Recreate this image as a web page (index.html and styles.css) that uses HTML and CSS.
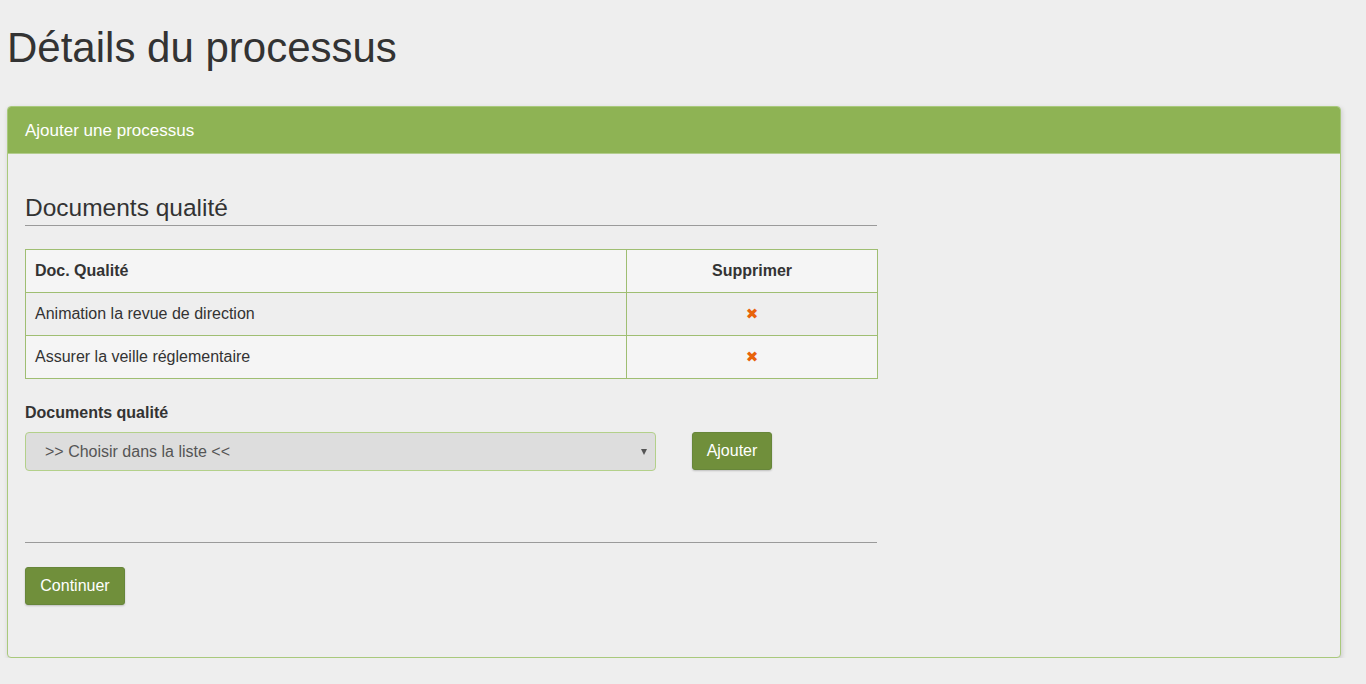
FILE: index.html
```html
<!DOCTYPE html>
<html lang="fr">
<head>
<meta charset="utf-8">
<title>Détails du processus</title>
<link rel="stylesheet" href="styles.css">
</head>
<body>
<h1 class="page-title">Détails du processus</h1>
<div class="panel">
  <div class="panel-heading">Ajouter une processus</div>
  <div class="panel-body">
    <div class="content">
      <h3 class="section-title">Documents qualité</h3>
      <table class="doc-table">
        <thead>
          <tr><th class="col-name">Doc. Qualité</th><th class="col-del">Supprimer</th></tr>
        </thead>
        <tbody>
          <tr class="odd"><td>Animation la revue de direction</td><td class="col-del"><span class="del">&#x2716;</span></td></tr>
          <tr><td>Assurer la veille réglementaire</td><td class="col-del"><span class="del">&#x2716;</span></td></tr>
        </tbody>
      </table>
      <label class="field-label">Documents qualité</label>
      <div class="field-row">
        <div class="select">
          <span>&gt;&gt; Choisir dans la liste &lt;&lt;</span>
          <span class="caret"></span>
        </div>
        <button class="btn btn-add">Ajouter</button>
      </div>
      <hr class="sep">
      <button class="btn btn-next">Continuer</button>
    </div>
  </div>
</div>
</body>
</html>
```

FILE: styles.css
```css
html, body {
  margin: 0;
  padding: 0;
  background: #eeeeee;
  font-family: "Liberation Sans", Arial, sans-serif;
  font-size: 16px;
  color: #333333;
}
body {
  padding: 0 25px 0 7px;
}
.page-title {
  margin: 0;
  padding: 24px 0 0 0;
  height: 106px;
  box-sizing: border-box;
  font-size: 42px;
  font-weight: normal;
  line-height: 48px;
  color: #333333;
}
.panel {
  border: 1px solid #a9c97c;
  border-radius: 4px;
  box-shadow: 1px 2px 5px rgba(0,0,0,0.15);
  background: #eeeeee;
}
.panel-heading {
  background: #8eb354;
  color: #ffffff;
  height: 47px;
  box-sizing: border-box;
  padding: 0 17px;
  line-height: 47px;
  font-size: 17px;
  border-radius: 3px 3px 0 0;
  border-bottom: 1px solid #b3cd8e;
}
.panel-body {
  padding: 40px 17px 52px;
}
.content {
  width: 852px;
}
.section-title {
  margin: 0;
  font-size: 24.5px;
  font-weight: normal;
  line-height: 28px;
  padding-bottom: 3px;
  border-bottom: 1px solid #9a9a9a;
  color: #333;
}
.doc-table {
  margin-top: 23px;
  width: 853px;
  border-collapse: collapse;
  border: 1px solid #9fbe72;
}
.doc-table th, .doc-table td {
  border: 1px solid #9fbe72;
  height: 43px;
  padding: 0 9px;
  text-align: left;
  box-sizing: border-box;
}
.doc-table thead tr { background: #f5f5f5; }
.doc-table tbody tr { background: #f5f5f5; }
.doc-table tbody tr.odd { background: #eeeeee; }
.doc-table th { font-weight: bold; }
.col-name { width: 601px; }
.doc-table .col-del { text-align: center; }
.del {
  color: #e8630a;
  font-size: 15px;
  font-family: "DejaVu Sans", sans-serif;
}
.field-label {
  display: block;
  font-weight: bold;
  margin-top: 24px;
  line-height: 20px;
}
.field-row {
  display: flex;
  align-items: flex-start;
  gap: 36px;
  margin-top: 9px;
}
.select {
  width: 631px;
  height: 39px;
  box-sizing: border-box;
  border: 1px solid #b3d08a;
  border-radius: 4px;
  background: #dddddd;
  display: flex;
  align-items: center;
  justify-content: space-between;
  padding: 0 8px 0 19px;
  color: #555555;
}
.caret {
  width: 0;
  height: 0;
  border-left: 3px solid transparent;
  border-right: 3px solid transparent;
  border-top: 6px solid #555555;
}
.btn {
  background: #708f3b;
  color: #ffffff;
  border: 1px solid #67863a;
  border-radius: 3px;
  font-family: "Liberation Sans", Arial, sans-serif;
  font-size: 16px;
  height: 38px;
  padding: 0;
  box-shadow: 0 1px 2px rgba(0,0,0,0.2);
}
.btn-add { width: 80px; }
.btn-next { width: 100px; }
.sep {
  border: 0;
  border-top: 1px solid #9a9a9a;
  margin: 71px 0 24px;
}
```
